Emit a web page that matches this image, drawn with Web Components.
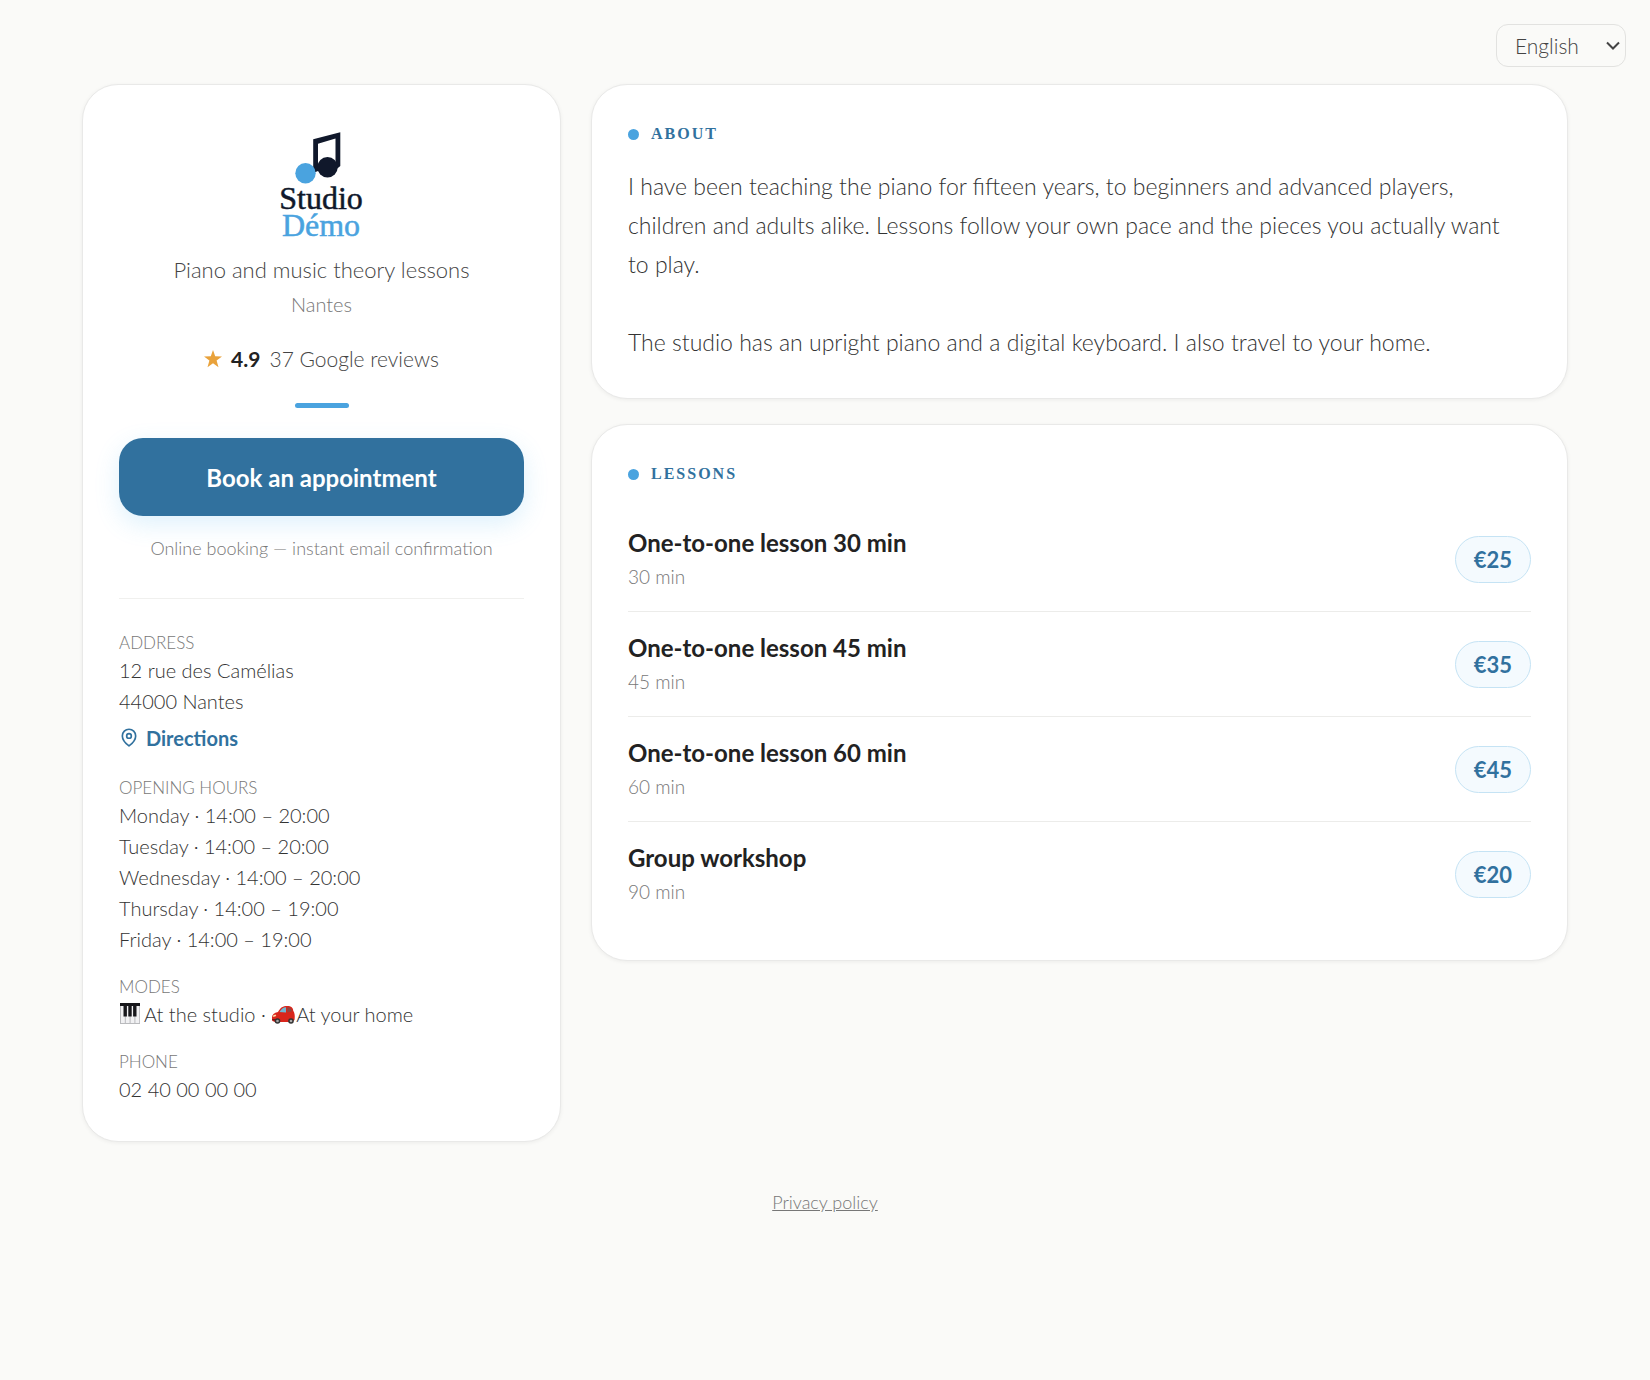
<!DOCTYPE html>
<html lang="en">
<head>
<meta charset="utf-8">
<meta name="viewport" content="width=device-width, initial-scale=1">
<title>Studio Démo</title>
<style>
  body {
    margin: 0;
    background: #fafaf8;
    color: #444;
    font-family: Lato, "Liberation Sans", sans-serif;
    font-weight: 300;
    font-size: 22px;
  }
</style>
</head>
<body>
<studio-page>
  <lang-select slot="lang"></lang-select>

  <studio-card slot="side">
    <studio-profile rating="4.9" reviews="37 Google reviews">
      <span slot="tagline">Piano and music theory lessons</span>
      <span slot="city">Nantes</span>
    </studio-profile>
    <booking-button note="Online booking — instant email confirmation">Book an appointment</booking-button>
    <info-list>
      <info-item label="Address">
        <div>12 rue des Camélias</div>
        <div>44000 Nantes</div>
        <map-link href="#directions">Directions</map-link>
      </info-item>
      <info-item label="Opening hours">
        <div>Monday · 14:00 – 20:00</div>
        <div>Tuesday · 14:00 – 20:00</div>
        <div>Wednesday · 14:00 – 20:00</div>
        <div>Thursday · 14:00 – 19:00</div>
        <div>Friday · 14:00 – 19:00</div>
      </info-item>
      <info-item label="Modes">
        <mode-icon name="piano"></mode-icon>At the studio · <mode-icon name="car"></mode-icon>At your home
      </info-item>
      <info-item label="Phone">02 40 00 00 00</info-item>
    </info-list>
  </studio-card>

  <studio-card slot="main" heading="About">
    <about-text>I have been teaching the piano for fifteen years, to beginners and advanced players, children and adults alike. Lessons follow your own pace and the pieces you actually want to play.

The studio has an upright piano and a digital keyboard. I also travel to your home.</about-text>
  </studio-card>

  <studio-card slot="main" heading="Lessons">
    <lesson-row name="One-to-one lesson 30 min" duration="30 min" price="€25"></lesson-row>
    <lesson-row name="One-to-one lesson 45 min" duration="45 min" price="€35"></lesson-row>
    <lesson-row name="One-to-one lesson 60 min" duration="60 min" price="€45"></lesson-row>
    <lesson-row name="Group workshop" duration="90 min" price="€20"></lesson-row>
  </studio-card>
</studio-page>

<script>
// Page shell: language bar, two columns, footer
class StudioPage extends HTMLElement {
  constructor() {
    super();
    const shadow = this.attachShadow({ mode: 'open' });
    shadow.innerHTML = `
    <style>
      :host { display: block; }
      header {
        display: flex;
        justify-content: flex-end;
        padding: 24px 24px 17px;
      }
      main {
        display: grid;
        grid-template-columns: minmax(0, 479px) minmax(0, 1fr);
        gap: 30px;
        align-items: start;
        max-width: 1486px;
        margin: 0 auto;
      }
      .main {
        display: flex;
        flex-direction: column;
        gap: 25px;
      }
      footer {
        padding: 47px 24px;
        text-align: center;
        font-size: 18px;
        line-height: 26px;
      }
      footer a { color: #777; }
      @media (max-width: 900px) {
        main { grid-template-columns: minmax(0, 1fr); padding: 0 16px; }
      }
    </style>
    <header><slot name="lang"></slot></header>
    <main>
      <aside><slot name="side"></slot></aside>
      <div class="main"><slot name="main"></slot></div>
    </main>
    <footer><a href="#privacy">Privacy policy</a></footer>
    `;
  }
}

class LangSelect extends HTMLElement {
  constructor() {
    super();
    const shadow = this.attachShadow({ mode: 'open' });
    shadow.innerHTML = `
    <style>
      :host { display: block; position: relative; }
      select {
        appearance: none;
        display: block;
        box-sizing: border-box;
        height: 43px;
        padding: 0 36px 0 18px;
        border: 1px solid #e2e2e0;
        border-radius: 12px;
        background: transparent;
        color: #444;
        font: inherit;
        font-size: 21px;
      }
      svg {
        position: absolute;
        right: 6px;
        top: 17px;
        pointer-events: none;
      }
    </style>
    <select aria-label="Language">
      <option>English</option>
      <option>Français</option>
    </select>
    <svg width="14" height="10" viewBox="0 0 14 10" fill="none" stroke="#444" stroke-width="2"><path d="M1 1.5 7 7.5 13 1.5"/></svg>
    `;
  }
}

// White panel with an optional heading
class StudioCard extends HTMLElement {
  constructor() {
    super();
    const shadow = this.attachShadow({ mode: 'open' });
    const heading = this.getAttribute('heading');
    shadow.innerHTML = `
    <style>
      :host {
        display: block;
        padding: 36px;
        border: 1px solid #e9e9e8;
        border-radius: 36px;
        background: #fff;
        box-shadow: 0 1px 4px rgba(0, 0, 0, 0.06);
      }
      h2 {
        display: flex;
        align-items: center;
        gap: 12px;
        margin: 0 0 20px;
        color: #31719e;
        font-family: "Liberation Serif", serif;
        font-size: 16px;
        font-weight: 700;
        line-height: 26px;
        letter-spacing: 2px;
        text-transform: uppercase;
      }
      h2::before {
        content: "";
        width: 11px;
        height: 11px;
        border-radius: 50%;
        background: #4aa3df;
      }
    </style>
    ${heading ? `<h2>${heading}</h2>` : ''}
    <slot></slot>
    `;
  }
}

class StudioProfile extends HTMLElement {
  constructor() {
    super();
    const shadow = this.attachShadow({ mode: 'open' });
    shadow.innerHTML = `
    <style>
      :host {
        display: flex;
        flex-direction: column;
        align-items: center;
        text-align: center;
      }
      .logo { display: block; margin-top: 6px; }
      .tagline { margin-top: 5px; line-height: 36px; }
      .city { color: #777; font-size: 20px; line-height: 32px; }
      .rating {
        display: flex;
        align-items: center;
        gap: 9px;
        margin-top: 23px;
        font-size: 21px;
        line-height: 32px;
      }
      .rating b { color: #222; font-weight: 700; }
      .bar {
        width: 54px;
        height: 5px;
        margin: 28px 0 30px;
        border-radius: 3px;
        background: #4aa3df;
      }
    </style>
    <svg class="logo" width="100" height="120" viewBox="0 0 100 120" role="img" aria-label="Studio Démo">
      <path d="M41.200 46V12.300L68.300 5.300V39L63.500 43V11.600L46 16.700V44Z" fill="#10182b"/>
      <circle cx="33.500" cy="46.300" r="10.200" fill="#4aa3df"/>
      <circle cx="55.500" cy="40.300" r="10.200" fill="#10182b"/>
      <g font-family="Liberation Serif, serif" font-weight="400" font-size="32" stroke-width="0.500" text-anchor="middle">
        <text x="49" y="82" fill="#10182b" stroke="#10182b">Studio</text>
        <text x="49" y="109" fill="#4aa3df" stroke="#4aa3df">Démo</text>
      </g>
    </svg>
    <div class="tagline"><slot name="tagline"></slot></div>
    <div class="city"><slot name="city"></slot></div>
    <div class="rating">
      <svg width="18" height="18" viewBox="0 0 18 18" fill="#e9a23b"><path d="M9 0l2.200 6.300 6.800.2-5.400 4.100 1.900 6.700L9 13.300l-5.500 4 1.900-6.700L0 6.500l6.800-.2z"/></svg>
      <b>${this.getAttribute('rating')}</b>
      <span>${this.getAttribute('reviews')}</span>
    </div>
    <div class="bar"></div>
    `;
  }
}

class BookingButton extends HTMLElement {
  constructor() {
    super();
    const shadow = this.attachShadow({ mode: 'open' });
    shadow.innerHTML = `
    <style>
      :host { display: block; text-align: center; }
      button {
        display: block;
        width: 100%;
        height: 78px;
        border: 0;
        border-radius: 24px;
        background: #31719e;
        color: #fff;
        font: inherit;
        font-size: 24px;
        font-weight: 700;
        box-shadow: 0 8px 24px rgba(74, 180, 239, 0.18);
        cursor: pointer;
      }
      p {
        margin: 18px 0 36px;
        color: #777;
        font-size: 18px;
        line-height: 28px;
      }
    </style>
    <button type="button"><slot></slot></button>
    <p>${this.getAttribute('note')}</p>
    `;
  }
}

class InfoList extends HTMLElement {
  constructor() {
    super();
    const shadow = this.attachShadow({ mode: 'open' });
    shadow.innerHTML = `
    <style>
      :host {
        display: flex;
        flex-direction: column;
        gap: 20px;
        padding-top: 32px;
        border-top: 1px solid #f0f0ee;
      }
    </style>
    <slot></slot>
    `;
  }
}

class InfoItem extends HTMLElement {
  constructor() {
    super();
    const shadow = this.attachShadow({ mode: 'open' });
    shadow.innerHTML = `
    <style>
      :host { display: block; }
      .label {
        color: #777;
        font-size: 17px;
        line-height: 24px;
        text-transform: uppercase;
      }
      .value {
        color: #333;
        font-size: 20px;
        line-height: 31px;
      }
    </style>
    <div class="label">${this.getAttribute('label')}</div>
    <div class="value"><slot></slot></div>
    `;
  }
}

class MapLink extends HTMLElement {
  constructor() {
    super();
    const shadow = this.attachShadow({ mode: 'open' });
    shadow.innerHTML = `
    <style>
      :host { display: block; padding-top: 7px; }
      a {
        display: inline-flex;
        align-items: center;
        gap: 7px;
        color: #31719e;
        font-size: 20px;
        font-weight: 700;
        line-height: 28px;
        text-decoration: none;
      }
    </style>
    <a href="${this.getAttribute('href')}">
      <svg width="20" height="20" viewBox="0 0 24 24" fill="none" stroke="currentColor" stroke-width="2" stroke-linecap="round" stroke-linejoin="round"><path d="M12 21.500s8-6 8-12a8 8 0 0 0-16 0c0 6 8 12 8 12z"/><circle cx="12" cy="9.500" r="2.800"/></svg>
      <slot></slot>
    </a>
    `;
  }
}

const icons = {
  piano: `<svg width="25" height="21" viewBox="0 0 25 21">
    <rect x="1" y="0" width="20" height="21" fill="#b9babd"/>
    <path d="M2 2h3.800v18H2zM6.800 2h3.800v18H6.800zM11.600 2h3.800v18h-3.800zM16.400 2h3.800v18h-3.800z" fill="#f1f1f3"/>
    <path d="M1 0h20v3H1zM4.500 3h3.400v10.500H4.500zM9.300 3h3.400v10.500H9.300zM14.100 3h3.400v10.500h-3.400z" fill="#17171b"/>
  </svg>`,
  car: `<svg width="25" height="21" viewBox="0 0 25 21">
    <path d="M1 14.500c0-3 2-4.500 6-5.500 2.500-4.500 5-6 9-6 4.500 0 6 1.500 6.300 5 1.500 2 1.700 5 1.200 9L21 19H4l-2.500-1c-.5-1-.5-2-.5-3.500z" fill="#d9261c"/>
    <path d="M8.500 9c1.800-3.200 3.700-4.600 6.500-4.700V9.500z" fill="#6fb7d3"/>
    <path d="M16.200 4.300c3 0 4.300.9 4.600 4.200l-4.600.8z" fill="#94443f"/>
    <path d="M2 12.500l2.500-1 .8 1.500-3 1z" fill="#ffe3ad"/>
    <path d="M1 16h6v1.500H1.500z" fill="#7d1612"/>
    <circle cx="6.500" cy="18" r="2.800" fill="#333"/><circle cx="6.500" cy="18" r="1.300" fill="#aaa"/>
    <circle cx="20" cy="18" r="2.800" fill="#333"/><circle cx="20" cy="18" r="1.300" fill="#aaa"/>
  </svg>`,
};

class ModeIcon extends HTMLElement {
  constructor() {
    super();
    const shadow = this.attachShadow({ mode: 'open' });
    shadow.innerHTML = `
    <style>
      :host { display: inline-block; vertical-align: -2px; line-height: 0; }
    </style>
    ${icons[this.getAttribute('name')]}
    `;
  }
}

class AboutText extends HTMLElement {
  constructor() {
    super();
    const shadow = this.attachShadow({ mode: 'open' });
    shadow.innerHTML = `
    <style>
      :host { display: block; }
      p {
        margin: 0;
        padding-right: 12px;
        color: #333;
        font-size: 23px;
        line-height: 39px;
        white-space: pre-line;
      }
    </style>
    <p><slot></slot></p>
    `;
  }
}

class LessonRow extends HTMLElement {
  constructor() {
    super();
    const shadow = this.attachShadow({ mode: 'open' });
    shadow.innerHTML = `
    <style>
      :host {
        display: flex;
        align-items: center;
        justify-content: space-between;
        gap: 20px;
        padding: 18px 0;
        border-bottom: 1px solid #ececea;
      }
      :host(:last-of-type) { padding-bottom: 16px; border-bottom: 0; }
      .name {
        color: #222;
        font-size: 24px;
        font-weight: 700;
        line-height: 36px;
      }
      .duration {
        color: #777;
        font-size: 19px;
        line-height: 32px;
      }
      .price {
        flex: none;
        padding: 0 18px;
        border: 1px solid #c5e3f4;
        border-radius: 24px;
        background: #f4fafe;
        color: #31719e;
        font-weight: 700;
        line-height: 45px;
      }
    </style>
    <div>
      <div class="name">${this.getAttribute('name')}</div>
      <div class="duration">${this.getAttribute('duration')}</div>
    </div>
    <div class="price">${this.getAttribute('price')}</div>
    `;
  }
}

customElements.define('studio-page', StudioPage);
customElements.define('lang-select', LangSelect);
customElements.define('studio-card', StudioCard);
customElements.define('studio-profile', StudioProfile);
customElements.define('booking-button', BookingButton);
customElements.define('info-list', InfoList);
customElements.define('info-item', InfoItem);
customElements.define('map-link', MapLink);
customElements.define('mode-icon', ModeIcon);
customElements.define('about-text', AboutText);
customElements.define('lesson-row', LessonRow);
</script>
</body>
</html>
